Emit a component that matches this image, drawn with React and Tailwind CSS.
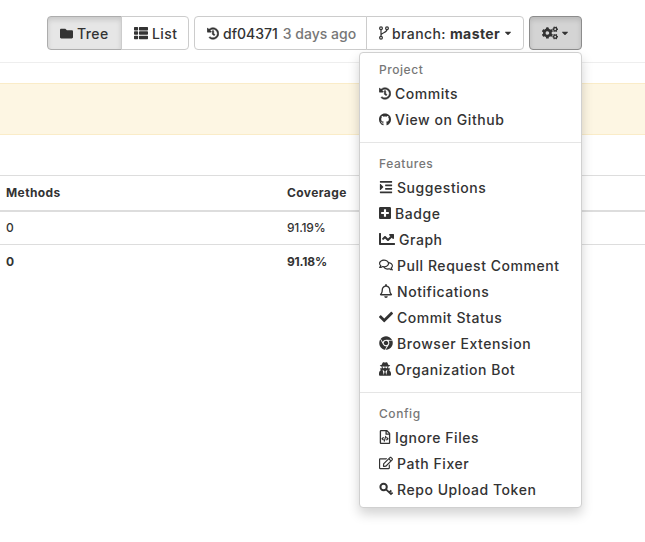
import React from "react";
import {
  FaFolder,
  FaThList,
  FaHistory,
  FaCogs,
  FaCaretDown,
  FaGithub,
  FaIndent,
  FaPlusSquare,
  FaChartLine,
  FaRegComments,
  FaRegBell,
  FaCheck,
  FaChrome,
  FaUserSecret,
  FaRegFileCode,
  FaRegEdit,
} from "react-icons/fa";

// fa 4 style key, ring at the top left
const KeyIcon = ({ className }) => (
  <svg viewBox="0 0 14 14" fill="none" stroke="currentColor" className={className}>
    <circle cx="4.6" cy="5" r="3.2" strokeWidth="2" />
    <path d="M7 7.4L12.6 12.6M10.2 10.2L12.4 8.6M12 11.9L13.6 10.6" strokeWidth="1.8" />
  </svg>
);

const menu = [
  {
    title: "Project",
    items: [
      { icon: FaHistory, label: "Commits", size: "h-[13px] w-[12px] stroke-current stroke-[20px]" },
      { icon: FaGithub, label: "View on Github", size: "h-[13px] w-[12px]" },
    ],
  },
  {
    title: "Features",
    items: [
      { icon: FaIndent, label: "Suggestions", size: "h-[14px] w-[14px]" },
      { icon: FaPlusSquare, label: "Badge", size: "h-[14px] w-[12px]" },
      { icon: FaChartLine, label: "Graph", size: "h-[16px] w-[16px]" },
      { icon: FaRegComments, label: "Pull Request Comment", size: "h-[14px] w-[14px]" },
      { icon: FaRegBell, label: "Notifications", size: "h-[14px] w-[14px]" },
      { icon: FaCheck, label: "Commit Status", size: "h-[14px] w-[14px]" },
      { icon: FaChrome, label: "Browser Extension", size: "h-[14px] w-[14px]" },
      { icon: FaUserSecret, label: "Organization Bot", size: "h-[14px] w-[12px]" },
    ],
  },
  {
    title: "Config",
    items: [
      { icon: FaRegFileCode, label: "Ignore Files", size: "h-[14px] w-[12px]" },
      { icon: FaRegEdit, label: "Path Fixer", size: "h-[14px] w-[14px]" },
      { icon: KeyIcon, label: "Repo Upload Token", size: "h-[14px] w-[14px]" },
    ],
  },
];

// old octicon style fork, the icon packs only have a wider one
const BranchIcon = () => (
  <svg viewBox="0 0 10 14" className="mr-[3px] h-[14px] w-[10px]" fill="none" stroke="currentColor" strokeWidth="1.2">
    <circle cx="2" cy="2.2" r="1.4" />
    <circle cx="8" cy="2.2" r="1.4" />
    <circle cx="2" cy="11.8" r="1.4" />
    <path d="M2 3.6V10.4M8 3.6C8 7 2.4 6.4 2 9" />
  </svg>
);

const Dropdown = () => (
  <div className="absolute left-[359px] top-[52px] w-[223px] rounded-[4px] border border-[#d0d0d0] bg-white pt-[6px] pb-[5px] tracking-[0.55px] shadow-[0_6px_12px_rgba(0,0,0,0.175)]">
    {menu.map((group, i) => (
      <div key={group.title}>
        {i > 0 && <div className="my-[10px] h-px bg-[#e5e5e5]" />}
        <div className="flex h-[21px] items-center pl-[19px] text-[12px] font-medium text-[#777777]">
          {group.title}
        </div>
        {group.items.map((item) => (
          <div
            key={item.label}
            className="flex h-[26px] items-center pl-[19px] text-[14px] font-medium text-[#333333]"
          >
            <item.icon className={`mr-[4px] shrink-0 ${item.size}`} />
            <span>{item.label}</span>
          </div>
        ))}
      </div>
    ))}
  </div>
);

const App = () => {
  return (
    <div
      className="relative h-[542px] w-[645px] overflow-hidden bg-white text-[#333333] tracking-[0.4px]"
      style={{ fontFamily: "Inter, 'Liberation Sans', sans-serif" }}
    >
      <div className="flex h-[62px] items-start justify-end gap-[5px] pt-4 pr-[63px] text-[14px] font-medium">
        <div className="flex h-[34px]">
          <div className="flex w-[75px] items-center gap-[4px] rounded-l-[4px] border border-[#adadad] bg-[#e6e6e6] pl-3 shadow-[inset_0_3px_5px_rgba(0,0,0,0.125)]">
            <FaFolder className="h-[13px] w-[13px]" /> Tree
          </div>
          <div className="-ml-px flex w-[68px] items-center gap-[4px] rounded-r-[4px] border border-[#cccccc] bg-white pl-3">
            <FaThList className="h-[14px] w-[14px]" /> List
          </div>
        </div>
        <div className="flex h-[34px]">
          <div className="flex w-[173px] items-center rounded-l-[4px] border border-[#cccccc] bg-white pl-3 tracking-normal">
            <FaHistory className="mr-[4px] h-[13px] w-[12px] stroke-current stroke-[20px]" />
            <span>df04371</span>
            <span className="ml-[5px] text-[#777777]">3 days ago</span>
          </div>
          <div className="-ml-px flex w-[158px] items-center rounded-r-[4px] border border-[#cccccc] bg-white pl-3">
            <BranchIcon />
            <span>branch:</span>
            <b className="ml-[4px] font-bold">master</b>
            <FaCaretDown className="ml-[4px] h-[10px] w-[8px]" />
          </div>
        </div>
        <div className="flex h-[34px] w-[53px] items-center gap-[3px] rounded-[4px] border border-[#8c8c8c] bg-[#d4d4d4] pl-3 shadow-[inset_0_3px_5px_rgba(0,0,0,0.125)]">
          <FaCogs className="h-[14px] w-[16px]" />
          <FaCaretDown className="h-[10px] w-[8px]" />
        </div>
      </div>

      <div className="h-px bg-[#eeeeee]" />
      <div className="mt-5 h-[52px] border-y border-[#faecc8] bg-[#fdf6e3]" />

      <table className="mt-10 w-full border-collapse text-[12px]">
        <tbody>
          <tr className="h-[35px] border-t border-b-2 border-t-[#dddddd] border-b-[#dddddd] font-bold">
            <td className="w-[287px] pl-[6px]">Methods</td>
            <td>Coverage</td>
          </tr>
          <tr className="h-[34px] border-b border-[#dddddd] font-medium tracking-[-0.2px]">
            <td className="pl-[6px]">0</td>
            <td>91.19%</td>
          </tr>
          <tr className="h-[34px] font-bold tracking-[-0.2px]">
            <td className="pl-[6px]">0</td>
            <td>91.18%</td>
          </tr>
        </tbody>
      </table>

      <Dropdown />
    </div>
  );
};

export default App;
